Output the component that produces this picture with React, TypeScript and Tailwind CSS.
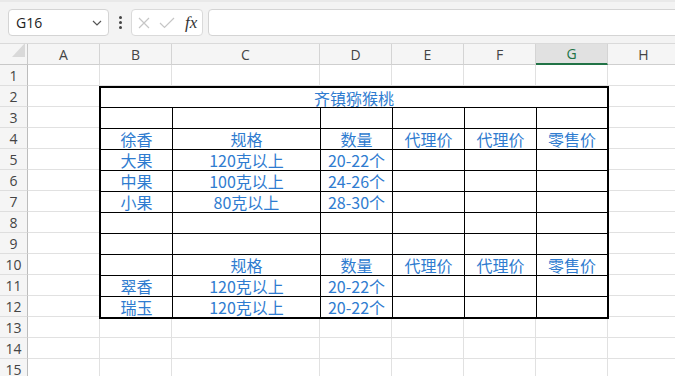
import React from "react";

const LETTERS = ["A", "B", "C", "D", "E", "F", "G", "H"];

type Row = string[];
const TABLE: Row[] = [
  ["齐镇猕猴桃"],
  ["", "", "", "", "", ""],
  ["徐香", "规格", "数量", "代理价", "代理价", "零售价"],
  ["大果", "120克以上", "20-22个", "", "", ""],
  ["中果", "100克以上", "24-26个", "", "", ""],
  ["小果", "80克以上", "28-30个", "", "", ""],
  ["", "", "", "", "", ""],
  ["", "", "", "", "", ""],
  ["", "规格", "数量", "代理价", "代理价", "零售价"],
  ["翠香", "120克以上", "20-22个", "", "", ""],
  ["瑞玉", "120克以上", "20-22个", "", "", ""],
];

function Toolbar() {
  return (
    <div className="h-[42px] shrink-0 bg-[#f3f3f3] border-b border-[#dadada] flex items-center pl-[8px] overflow-hidden">
      <div className="w-[101px] h-[27px] shrink-0 bg-white border border-[#d4d4d4] rounded-[4px] flex items-center pl-[7px] pr-[6px] justify-between">
        <span className="text-[14px] text-[#222] font-['Open_Sans','Liberation_Sans',sans-serif]">G16</span>
        <svg width="10" height="6" viewBox="0 0 10 6">
          <polyline points="1,1 5,5 9,1" fill="none" stroke="#555" strokeWidth="1.2" />
        </svg>
      </div>
      <div className="w-[22px] shrink-0 flex flex-col items-center gap-[2px]">
        <div className="w-[3px] h-[3px] rounded-full bg-[#444]" />
        <div className="w-[3px] h-[3px] rounded-full bg-[#444]" />
        <div className="w-[3px] h-[3px] rounded-full bg-[#444]" />
      </div>
      <div className="w-[72px] h-[27px] shrink-0 bg-white border border-[#dadada] rounded-[4px] flex items-center pl-[6px] gap-[9px]">
        <svg width="12" height="12" viewBox="0 0 12 12">
          <path d="M1 1 L11 11 M11 1 L1 11" stroke="#c6c6c6" strokeWidth="1.2" fill="none" />
        </svg>
        <svg width="16" height="12" viewBox="0 0 16 12">
          <polyline points="1,6 5.5,10.5 15,1" stroke="#c6c6c6" strokeWidth="1.2" fill="none" />
        </svg>
        <span className="text-[17px] leading-none italic text-[#333] font-['Liberation_Serif',serif] ml-[1px]">fx</span>
      </div>
      <div className="flex-1 h-[27px] ml-[5px] -mr-[6px] bg-white border border-[#d4d4d4] rounded-[4px]" />
    </div>
  );
}

function Corner() {
  return (
    <div className="bg-[#f5f5f5] border-r border-b border-[#c8c8c8] flex items-end justify-end pr-[2px] pb-[7px]">
      <svg width="13" height="14" viewBox="0 0 13 14">
        <path d="M13 0 L13 14 L0 14 Z" fill="#d9d9d9" />
      </svg>
    </div>
  );
}

function ColHead({ l }: { l: string }) {
  if (l === "G") {
    return (
      <div className="bg-[#e1e1e1] border-r border-[#d4d4d4] border-b-2 border-b-[#217346] flex items-center justify-center text-[14px] text-[#217346] font-['Open_Sans','Liberation_Sans',sans-serif]">
        {l}
      </div>
    );
  }
  return (
    <div className="bg-[#f5f5f5] border-r border-b border-[#d4d4d4] border-b-[#cfcfcf] flex items-center justify-center text-[14px] text-[#444] font-['Open_Sans','Liberation_Sans',sans-serif]">
      {l}
    </div>
  );
}

function RowHead({ n }: { n: number }) {
  return (
    <div className="bg-[#f5f5f5] border-r border-r-[#bcbcbc] border-b border-b-[#dedede] flex items-center justify-center text-[14px] text-[#444] font-['Open_Sans','Liberation_Sans',sans-serif]">
      {n}
    </div>
  );
}

function Cell() {
  return <div className="border-r border-b border-[#e1e1e1]" />;
}

function DataTable() {
  const items: React.ReactNode[] = [];
  const lastRow = TABLE.length - 1;
  TABLE.forEach((row, ri) => {
    if (ri === 0) {
      items.push(
        <div
          key="title"
          className="col-span-6 border-b border-black flex items-center justify-center text-[16px] leading-none text-[#2f7cd0]"
        >
          {row[0]}
        </div>
      );
      return;
    }
    row.forEach((txt, ci) => {
      const last = ci === 5;
      const bottom = ri !== lastRow;
      let cls = "flex items-center justify-center text-[16px] leading-none text-[#2f7cd0] whitespace-nowrap border-black";
      if (!last) cls += " border-r";
      if (bottom) cls += " border-b";
      items.push(
        <div key={`${ri}-${ci}`} className={cls}>
          {txt}
        </div>
      );
    });
  });
  return (
    <div className="col-span-6 row-span-11 z-[1] -ml-[1px] -mr-[1px] -mb-[2px] border-2 border-black bg-white grid grid-cols-[72px_148px_72px_72px_72px_70px] grid-rows-[20px_repeat(9,21px)_20px] font-['Noto_Sans_CJK_SC',sans-serif]">
      {items}
    </div>
  );
}

function Sheet() {
  const cells: React.ReactNode[] = [];
  cells.push(<Corner key="corner" />);
  LETTERS.forEach((l) => cells.push(<ColHead key={`h-${l}`} l={l} />));
  for (let r = 1; r <= 15; r++) {
    cells.push(<RowHead key={`r-${r}`} n={r} />);
    if (r === 1 || r >= 13) {
      LETTERS.forEach((l) => cells.push(<Cell key={`${l}${r}`} />));
    } else if (r === 2) {
      cells.push(<Cell key={`A${r}`} />);
      cells.push(<DataTable key="table" />);
      cells.push(<Cell key={`H${r}`} />);
    } else {
      cells.push(<Cell key={`A${r}`} />);
      cells.push(<Cell key={`H${r}`} />);
    }
  }
  return (
    <div className="shrink-0 grid grid-cols-[28px_72px_72px_148px_72px_72px_72px_72px_72px] auto-rows-[21px] bg-white">
      {cells}
    </div>
  );
}

export default function App() {
  return (
    <div className="w-[675px] h-[376px] overflow-hidden bg-white flex flex-col">
      <div className="h-[2px] shrink-0 bg-[#e9e9e9]" />
      <Toolbar />
      <Sheet />
    </div>
  );
}
